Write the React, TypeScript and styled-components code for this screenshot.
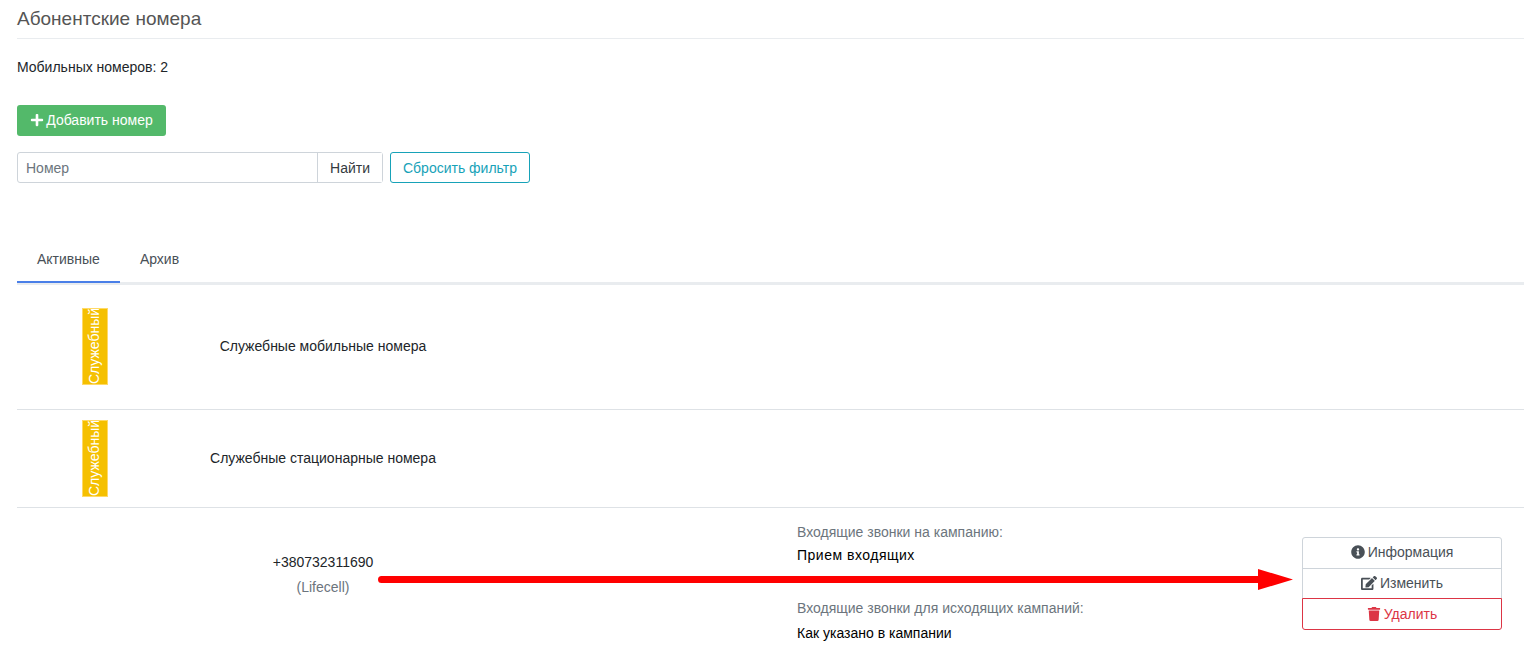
import React from 'react';
import styled, { createGlobalStyle } from 'styled-components';
import { FaPlus, FaInfoCircle, FaEdit, FaTrash } from 'react-icons/fa';

const Global = createGlobalStyle`
    html, body {
        margin: 0;
        height: 658px;
        overflow: hidden;
        background: #fff;
    }
    body {
        font-family: "Liberation Sans", Arial, sans-serif;
        font-size: 14px;
        color: #212529;
    }
`

const Page = styled.div`
    position: relative;
    padding-left: 17px;
`
const Header = styled.h4`
    margin: 0;
    height: 38px;
    line-height: 38px;
    font-size: 19px;
    font-weight: 400;
    color: #555;
    border-bottom: 1px solid #e9ecef;
`
const Counter = styled.p`
    margin: 0;
    padding-top: 20px;
    height: 46px;
    line-height: 17px;
    box-sizing: border-box;
`
const AddButton = styled.button`
    display: flex;
    align-items: center;
    justify-content: center;
    gap: 2px;
    margin-top: 20px;
    width: 149px;
    height: 31px;
    padding: 0 0 2px;
    font: inherit;
    color: #fff;
    background: #53b96a;
    border: none;
    border-radius: 3px;
`
const Filter = styled.form`
    display: flex;
    margin-top: 16px;
    gap: 7px;
`
const InputGroup = styled.div`
    display: flex;
    width: 366px;
    height: 31px;
    box-sizing: border-box;
    border: 1px solid #ced4da;
    border-radius: 3px;
`
const SearchInput = styled.input`
    flex: 1;
    min-width: 0;
    padding: 0 8px;
    font: inherit;
    border: none;
    outline: none;
    background: transparent;
    &::placeholder {
        color: #6c757d;
        opacity: 1;
    }
`
const SearchButton = styled.button`
    width: 65px;
    padding: 0;
    font: inherit;
    color: #343a40;
    background: #fff;
    border: none;
    border-left: 1px solid #ced4da;
`
const ResetButton = styled.button`
    width: 140px;
    height: 31px;
    padding: 0;
    font: inherit;
    color: #17a2b8;
    background: #fff;
    border: 1px solid #17a2b8;
    border-radius: 3px;
`
const Tabs = styled.ul`
    display: flex;
    list-style: none;
    margin: 57px 0 0;
    padding: 0;
    height: 42px;
    border-bottom: 3px solid #e9ecef;
`
const Tab = styled.li<{ $active?: boolean }>`
    height: 43px;
    box-sizing: border-box;
    padding: 0 20px;
    line-height: 38px;
    color: #495057;
    border-bottom: ${p => (p.$active ? '2px solid #4a7fe8' : 'none')};
`
const Row = styled.div<{ $height: number; $border?: boolean }>`
    display: grid;
    grid-template-columns: 156px 300px 324px 505px 200px;
    align-items: center;
    height: ${p => p.$height}px;
    box-sizing: border-box;
    border-bottom: ${p => (p.$border ? '1px solid #dee2e6' : 'none')};
`
const BadgeCell = styled.div`
    display: flex;
    justify-content: center;
    padding-bottom: 1px;
`
const Badge = styled.span`
    display: block;
    writing-mode: vertical-rl;
    transform: rotate(180deg);
    width: 26px;
    height: 77px;
    box-sizing: border-box;
    line-height: 22px;
    text-align: left;
    white-space: nowrap;
    overflow: hidden;
    color: #fff;
    background: #f5c000;
    border: 1px solid #ffd966;
`
const Name = styled.div`
    text-align: center;
    white-space: nowrap;
    padding-bottom: 2px;
`
const PhoneCell = styled.div`
    grid-column: 2;
    align-self: start;
    text-align: center;
    padding-top: 42px;
    line-height: 25px;
`
const Muted = styled.div`
    color: #6c757d;
`
const InfoCell = styled.div`
    grid-column: 4;
    align-self: start;
    padding-top: 16px;
    display: flex;
    flex-direction: column;
    gap: 36px;
`
const InfoBlock = styled.div`
    display: flex;
    flex-direction: column;
    gap: 8px;
    line-height: 17px;
`
const Value = styled.div<{ $spaced?: boolean }>`
    color: #000;
    letter-spacing: ${p => (p.$spaced ? '0.5px' : '0')};
    margin-top: ${p => (p.$spaced ? '-2px' : '0')};
`
const Actions = styled.div`
    align-self: start;
    display: flex;
    flex-direction: column;
    padding-top: 29px;
`
const ActionButton = styled.button<{ $danger?: boolean }>`
    display: flex;
    align-items: center;
    justify-content: center;
    gap: 3px;
    height: 31.67px;
    margin-top: -1px;
    padding: 0;
    font: inherit;
    color: ${p => (p.$danger ? '#dc3545' : '#495057')};
    background: #fff;
    border: 1px solid ${p => (p.$danger ? '#dc3545' : '#ced4da')};
    position: relative;
    z-index: ${p => (p.$danger ? 1 : 0)};
    &:first-child {
        border-radius: 3px 3px 0 0;
        margin-top: 0;
        padding-bottom: 2px;
    }
    &:last-child {
        border-radius: 0 0 3px 3px;
    }
`
const Arrow = styled.svg`
    position: absolute;
    left: 378px;
    top: 569px;
`

export default function App() {
    return (
        <Page>
            <Global />
            <Header>Абонентские номера</Header>
            <Counter>Мобильных номеров: 2</Counter>
            <AddButton type="button">
                <FaPlus size={14} />
                Добавить номер
            </AddButton>
            <Filter>
                <InputGroup>
                    <SearchInput placeholder="Номер" />
                    <SearchButton type="button">Найти</SearchButton>
                </InputGroup>
                <ResetButton type="button">Сбросить фильтр</ResetButton>
            </Filter>
            <Tabs>
                <Tab $active>Активные</Tab>
                <Tab>Архив</Tab>
            </Tabs>
            <Row $height={125} $border>
                <BadgeCell><Badge>Служебный</Badge></BadgeCell>
                <Name>Служебные мобильные номера</Name>
            </Row>
            <Row $height={98} $border>
                <BadgeCell><Badge>Служебный</Badge></BadgeCell>
                <Name>Служебные стационарные номера</Name>
            </Row>
            <Row $height={150}>
                <PhoneCell>
                    <div>+380732311690</div>
                    <Muted>(Lifecell)</Muted>
                </PhoneCell>
                <InfoCell>
                    <InfoBlock>
                        <Muted>Входящие звонки на кампанию:</Muted>
                        <Value $spaced>Прием входящих</Value>
                    </InfoBlock>
                    <InfoBlock>
                        <Muted>Входящие звонки для исходящих кампаний:</Muted>
                        <Value>Как указано в кампании</Value>
                    </InfoBlock>
                </InfoCell>
                <Actions>
                    <ActionButton type="button"><FaInfoCircle size={14} /> Информация</ActionButton>
                    <ActionButton type="button"><FaEdit size={16} /> Изменить</ActionButton>
                    <ActionButton type="button" $danger><FaTrash size={14} /> Удалить</ActionButton>
                </Actions>
            </Row>
            <Arrow width="916" height="22" viewBox="0 0 916 22">
                <path d="M3.5 7 H880 V0 L915 10.5 L880 21 V14 H3.5 A3.5 3.5 0 0 1 3.5 7 Z" fill="#ff0000" />
            </Arrow>
        </Page>
    );
}
